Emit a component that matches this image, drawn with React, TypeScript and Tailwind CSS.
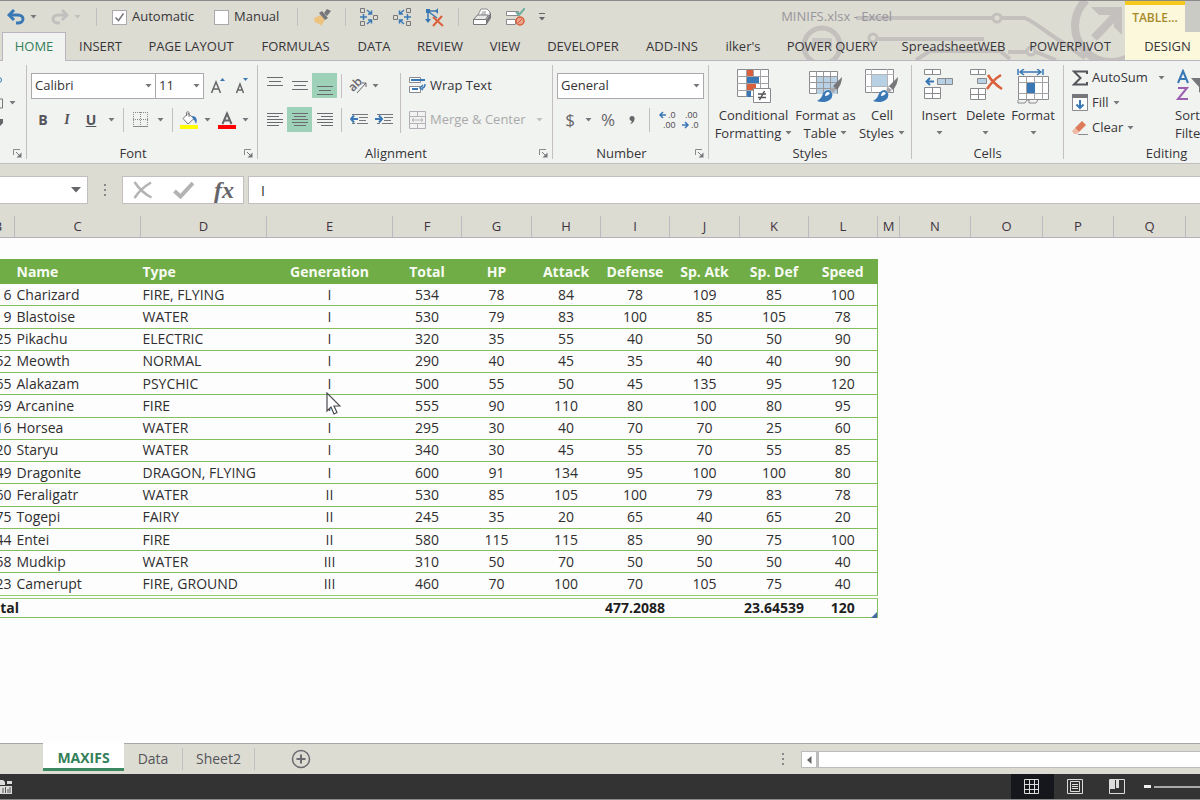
import type { ReactNode } from 'react';
import clsx from 'clsx';

const tabs = [
  { label: 'HOME', width: 'w-[64px]' },
  { label: 'INSERT', width: 'w-[69px]' },
  { label: 'PAGE LAYOUT', width: 'w-[112px]' },
  { label: 'FORMULAS', width: 'w-[97px]' },
  { label: 'DATA', width: 'w-[60px]' },
  { label: 'REVIEW', width: 'w-[72px]' },
  { label: 'VIEW', width: 'w-[58px]' },
  { label: 'DEVELOPER', width: 'w-[98px]' },
  { label: 'ADD-INS', width: 'w-[80px]' },
  { label: "ilker's", width: 'w-[62px]' },
  { label: 'POWER QUERY', width: 'w-[116px]' },
  { label: 'SpreadsheetWEB', width: 'w-[127px]' },
  { label: 'POWERPIVOT', width: 'w-[106px]' },
];

const columns = [
  { letter: 'B', width: 'w-[33px]' },
  { letter: 'C', width: 'w-[126px]' },
  { letter: 'D', width: 'w-[126px]' },
  { letter: 'E', width: 'w-[126px]' },
  { letter: 'F', width: 'w-[69px]' },
  { letter: 'G', width: 'w-[70px]' },
  { letter: 'H', width: 'w-[69px]' },
  { letter: 'I', width: 'w-[69px]' },
  { letter: 'J', width: 'w-[70px]' },
  { letter: 'K', width: 'w-[69px]' },
  { letter: 'L', width: 'w-[69px]' },
  { letter: 'M', width: 'w-[22px]' },
  { letter: 'N', width: 'w-[71px]' },
  { letter: 'O', width: 'w-[72px]' },
  { letter: 'P', width: 'w-[71px]' },
  { letter: 'Q', width: 'w-[72px]' },
];

const headings = [
  'Generation',
  'Total',
  'HP',
  'Attack',
  'Defense',
  'Sp. Atk',
  'Sp. Def',
  'Speed',
];

type Row = [number, string, string, string, ...number[]];

const rows: Row[] = [
  [6, 'Charizard', 'FIRE, FLYING', 'I', 534, 78, 84, 78, 109, 85, 100],
  [9, 'Blastoise', 'WATER', 'I', 530, 79, 83, 100, 85, 105, 78],
  [25, 'Pikachu', 'ELECTRIC', 'I', 320, 35, 55, 40, 50, 50, 90],
  [52, 'Meowth', 'NORMAL', 'I', 290, 40, 45, 35, 40, 40, 90],
  [65, 'Alakazam', 'PSYCHIC', 'I', 500, 55, 50, 45, 135, 95, 120],
  [59, 'Arcanine', 'FIRE', 'I', 555, 90, 110, 80, 100, 80, 95],
  [116, 'Horsea', 'WATER', 'I', 295, 30, 40, 70, 70, 25, 60],
  [120, 'Staryu', 'WATER', 'I', 340, 30, 45, 55, 70, 55, 85],
  [149, 'Dragonite', 'DRAGON, FLYING', 'I', 600, 91, 134, 95, 100, 100, 80],
  [160, 'Feraligatr', 'WATER', 'II', 530, 85, 105, 100, 79, 83, 78],
  [175, 'Togepi', 'FAIRY', 'II', 245, 35, 20, 65, 40, 65, 20],
  [244, 'Entei', 'FIRE', 'II', 580, 115, 115, 85, 90, 75, 100],
  [258, 'Mudkip', 'WATER', 'III', 310, 50, 70, 50, 50, 50, 40],
  [323, 'Camerupt', 'FIRE, GROUND', 'III', 460, 70, 100, 70, 105, 75, 40],
];

const totals = ['', '', '', '', '477.2088', '', '23.64539', '120'];

const Caret = ({ className = 'text-[#77767a]' }: { className?: string }) => (
  <svg
    width="7"
    height="4"
    viewBox="0 0 7 4"
    className={clsx('inline-block shrink-0', className)}
    aria-hidden="true"
  >
    <path d="M0.5 0h6L3.500 3.500z" fill="currentColor" />
  </svg>
);

const Divider = ({ className }: { className?: string }) => (
  <div className={clsx('w-px shrink-0 bg-[#c3bfc0]', className)} />
);

type IconButtonProps = {
  label: string;
  className?: string;
  children: ReactNode;
};

const IconButton = ({ label, className, children }: IconButtonProps) => (
  <button
    type="button"
    aria-label={label}
    className={clsx(
      'flex h-[25px] shrink-0 items-center justify-center',
      className
    )}
  >
    {children}
  </button>
);

type GroupProps = {
  title: string;
  className: string;
  launcher?: boolean;
  children: ReactNode;
};

const Group = ({ title, className, launcher, children }: GroupProps) => (
  <section
    aria-label={title || 'Clipboard'}
    className={clsx(
      'mt-1 flex h-[94px] shrink-0 flex-col justify-between border-r border-[#c3bfc0]',
      className
    )}
  >
    {children}
    <div className="flex h-3 items-center">
      <span className="flex-1 text-center leading-[18px]">{title}</span>
      {launcher && (
        <button
          type="button"
          aria-label={`${title || 'Clipboard'} settings`}
          className="flex w-[18px] items-center justify-center"
        >
          <svg width="9" height="9" viewBox="0 0 9 9" fill="none">
            <path d="M.5 6V.5H7" stroke="#8a898d" />
            <path d="M3 3l3 3" stroke="#77767a" />
            <path d="M8.500 3.500v5h-5z" fill="#77767a" />
          </svg>
        </button>
      )}
    </div>
  </section>
);

type DropdownProps = {
  label: string;
  value: string;
  className: string;
};

const Dropdown = ({ label, value, className }: DropdownProps) => (
  <div className={clsx('relative h-[26px] shrink-0', className)}>
    <select
      aria-label={label}
      className="h-full w-full appearance-none border border-[#aba9ad] bg-white pl-[3px] text-[13px] text-[#333236]"
    >
      <option>{value}</option>
    </select>
    <div className="pointer-events-none absolute inset-y-0 right-1 flex items-center">
      <Caret />
    </div>
  </div>
);

// Ruled lines; `kind` moves or shortens them
const LinesIcon = ({ kind }: { kind: string }) => {
  const paths: Record<string, string> = {
    top: 'M0 2.500h16M2 6.500h12M0 10.500h16',
    middle: 'M0 6.500h16M2 10.500h12M0 14.500h16',
    bottom: 'M0 11.500h16M2 15.500h12M0 19.500h16',
    left: 'M0 4.500h16M0 7.500h12M0 10.500h16M0 13.500h16M0 16.500h12',
    center: 'M0 4.500h16M2 7.500h12M0 10.500h16M0 13.500h16M2 16.500h12',
    right: 'M0 4.500h16M4 7.500h12M0 10.500h16M0 13.500h16M4 16.500h12',
  };
  return (
    <svg width="16" height="21" viewBox="0 0 16 21">
      <path d={paths[kind]} stroke="#6b6a70" fill="none" />
    </svg>
  );
};

const IndentIcon = ({ out }: { out?: boolean }) => (
  <svg width="18" height="15" viewBox="0 0 18 15" fill="none">
    <path d="M2 2.500h16M9 5.500h9M9 8.500h7M2 11.500h3M7 11.500h11" stroke="#77767a" />
    <path
      d={out ? 'M8 7H1M4 3.500L1 7l3 3.500' : 'M0 7h7M4 3.500L7 7l-3 3.500'}
      stroke="#3a78b5"
      strokeWidth="2"
    />
  </svg>
);

const TraceIcon = ({ flip }: { flip?: boolean }) => (
  <svg
    width="20"
    height="20"
    viewBox="0 0 20 20"
    fill="none"
    className={flip ? '-scale-x-100' : ''}
  >
    <path
      d="M1.500 1.500h4v4h-4zM1.500 14.500h4v4h-4zM14.500 8.500h4v4h-4z"
      stroke="#77767a"
    />
    <path
      d="M1 10h7M4.500 7v6M8 3l4 3.500M8 17l4-3.500M12.500 3.500v3.500H9M12.500 16.500V13H9"
      stroke="#3a78b5"
      strokeWidth="1.500"
    />
  </svg>
);

const BrushShape = () => (
  <>
    <path d="M34 8l-9 9 4 4c3-4 5-8 5-13z" fill="#77767a" />
    <path d="M24 18l-2 3 3 3 3-3z" fill="#a9a8ac" />
    <path d="M21 21c-4 0-6 3-7 6-1 2-3 4-5 5 6 2 13 1 15-4 1-3 0-5-3-7z" fill="#3a78b5" />
    <path d="M20 23c-2 0-3 2-3 4 2 0 4-1 5-3z" fill="#fff" />
  </>
);

const ConditionalIcon = () => (
  <svg width="36" height="34" viewBox="0 0 36 34" fill="none">
    <path d="M1.500.5h31v27h-31z" fill="#fff" stroke="#8a898d" />
    <path
      d="M10.500 0v28M17.500 0v28M24.500 0v28M1 7.500h32M1 14.500h32M1 21.500h32"
      stroke="#a3a2a6"
    />
    <path d="M11 1h6v6h-6zM11 15h9v6h-9z" fill="#d9603b" />
    <path d="M11 8h12v6H11zM11 22h4v6h-4z" fill="#3a78b5" />
    <path d="M17.500 19.500h17v14h-17z" fill="#fff" stroke="#8a898d" />
    <path d="M22 25h8M22 28.500h8M28.500 22l-5 9" stroke="#55545a" strokeWidth="1.500" />
  </svg>
);

const FormatTableIcon = () => (
  <svg width="36" height="34" viewBox="0 0 36 34" fill="none">
    <path d="M1.500 2.500h28v22h-28z" fill="#fff" stroke="#8a898d" />
    <path d="M9 8h20v17H9z" fill="#b7d0e4" />
    <path
      d="M8.500 2v23M15.500 2v23M22.500 2v23M1 7.500h29M1 13.500h29M1 19.500h29"
      stroke="#98979c"
    />
    <BrushShape />
  </svg>
);

const CellStylesIcon = () => (
  <svg width="36" height="34" viewBox="0 0 36 34" fill="none">
    <path d="M1.500.5h28v23h-28z" fill="#fff" stroke="#8a898d" />
    <path d="M8 6h15v11H8z" fill="#b7d0e4" />
    <path d="M7.500 0v24M23.500 0v24M1 5.500h29M1 17.500h29" stroke="#b5b4b8" />
    <BrushShape />
  </svg>
);

const InsertIcon = () => (
  <svg width="30" height="34" viewBox="0 0 30 34" fill="none">
    <path d="M.5.5h16v5H.500zM8.500 0v6" fill="#fff" stroke="#8a898d" />
    <path d="M.5 18.500h16v11H.500zM.5 24.500h16M8.500 18v12" fill="#fff" stroke="#8a898d" />
    <path d="M13.500 9.500h15v6h-15zM21.500 9v7" fill="#b7d0e4" stroke="#8a898d" />
    <path d="M10 12.500H3M6 9l-3.500 3.500L6 16" stroke="#3a78b5" strokeWidth="2" />
  </svg>
);

const DeleteIcon = () => (
  <svg width="34" height="34" viewBox="0 0 34 34" fill="none">
    <path d="M1.500.5h15v5h-15zM9.500 0v6" fill="#fff" stroke="#8a898d" />
    <path d="M1.500 19.500h15v11h-15zM1 25.500h16M9.500 19v12" fill="#fff" stroke="#8a898d" />
    <path d="M8.500 9.500h9v5h-9z" fill="#b7d0e4" stroke="#8a898d" />
    <path d="M19 6c3 5 8 10 14 14M32 6c-5 3-10 8-14 14" stroke="#d9603b" strokeWidth="2.500" />
  </svg>
);

const FormatIcon = () => (
  <svg width="34" height="36" viewBox="0 0 34 36" fill="none">
    <path d="M2 0v6M27 0v6M4 3h21M8 0L4 3l4 3M21 0l4 3-4 3" stroke="#3a78b5" strokeWidth="1.500" />
    <path d="M2.500 7.500h30v23h-30z" fill="#fff" stroke="#8a898d" />
    <path d="M10.500 7v24M18.500 7v24M26.500 7v24M2 13.500h31M2 24.500h31" stroke="#a3a2a6" />
    <path d="M11 14h8v10h-8z" fill="#3a78b5" />
    <path d="M2 31v3h7l2-3h2v3h7l2-3" stroke="#8a898d" />
  </svg>
);

const Circuit = () => (
  <svg
    className="pointer-events-none absolute top-0 right-0"
    width="420"
    height="59"
    viewBox="780 1 420 59"
    fill="none"
    stroke="#c3c0be"
    aria-hidden="true"
  >
    <path d="M856 18h136M1002 18h23c10 4 20 14 40 26l20 14" strokeWidth="4" />
    <circle cx="997" cy="18" r="4" strokeWidth="3" />
    <circle cx="822" cy="46" r="18" strokeWidth="5" />
    <path d="M812 38h20v10h-4v-5h-4v5h-4v-5h-4v5h-4z" fill="#c9c6c4" stroke="none" />
    <circle cx="873" cy="38" r="4" strokeWidth="3" />
    <path d="M878 39h106" strokeWidth="4" />
    <path d="M916 60l14-9h70l10 8M1008 52h18M1036 52l20 8" strokeWidth="4" />
    <circle cx="1031" cy="51" r="4" strokeWidth="3" />
    <path d="M1086 0a36 36 0 1 0 50 0" strokeWidth="8" />
    <path d="M1094 38l22-23" strokeWidth="8" />
    <path d="M1091 7h31v28l-8-8V15h-15z" fill="#c3c0be" stroke="none" />
  </svg>
);

const QuickAccess = () => (
  <div className="flex h-[31px] items-center pt-px pl-[7px]">
    <button type="button" aria-label="Undo" className="w-[18px]">
      <svg width="18" height="16" viewBox="0 0 18 16" fill="none">
        <path d="M3 6h8c3 0 5 2 5 4s-2 4-5 4H9" stroke="#3a78b5" strokeWidth="3" />
        <path d="M7 1L2 6l5 5" stroke="#3a78b5" strokeWidth="3" />
      </svg>
    </button>
    <Caret className="ml-[5px] text-[#77767a]" />
    <button type="button" aria-label="Redo" className="ml-[14px] w-[18px]">
      <svg width="18" height="16" viewBox="0 0 18 16" fill="none">
        <path d="M15 6H7c-3 0-5 2-5 4s2 4 5 4h2" stroke="#c2c0bf" strokeWidth="3" />
        <path d="M11 1l5 5-5 5" stroke="#c2c0bf" strokeWidth="3" />
      </svg>
    </button>
    <Caret className="ml-[5px] text-[#c2c0bf]" />
    <Divider className="ml-[15px] h-[18px]" />
    <label className="ml-[15px] flex items-center">
      <input
        type="checkbox"
        defaultChecked
        className="peer h-[15px] w-[15px] appearance-none border border-[#aba9ad] bg-white"
      />
      <svg
        width="15"
        height="15"
        viewBox="0 0 15 15"
        fill="none"
        className="-ml-[15px] hidden peer-checked:block"
      >
        <path d="M3.500 7.500l3 3 5-7" stroke="#77767a" strokeWidth="1.500" />
      </svg>
      <span className="ml-[5px] w-[62px]">Automatic</span>
    </label>
    <label className="ml-5 flex items-center">
      <input
        type="checkbox"
        className="h-[15px] w-[15px] appearance-none border border-[#aba9ad] bg-white"
      />
      <span className="ml-[5px] w-[46px]">Manual</span>
    </label>
    <Divider className="ml-[17px] h-[18px]" />
    <button type="button" aria-label="Format Painter" className="ml-[15px]">
      <svg width="18" height="17" viewBox="0 0 18 17">
        <path d="M1 9l7-3 4 5-4 6-2-3-1 2-1-3-2 1z" fill="#ecc27e" />
        <path d="M6 4l3-2 6 7-3 2z" fill="#77767a" />
        <path d="M11 4l3-4 4 2-4 5z" fill="#77767a" />
      </svg>
    </button>
    <Divider className="ml-[14px] h-[18px]" />
    <button type="button" aria-label="Trace Precedents" className="ml-[13px]">
      <TraceIcon />
    </button>
    <button type="button" aria-label="Trace Dependents" className="ml-[13px]">
      <TraceIcon flip />
    </button>
    <button type="button" aria-label="Remove Arrows" className="ml-[13px]">
      <svg width="19" height="19" viewBox="0 0 19 19" fill="none">
        <path d="M3 3v11M3 3h10M4 4l8 6" stroke="#3a78b5" strokeWidth="1.500" />
        <path d="M1 1h4v4H1zM10 3l3-3v6zM0 11h6l-3 4z" fill="#3a78b5" />
        <path d="M8 9l10 9M17 8L8 18" stroke="#d9603b" strokeWidth="2" />
      </svg>
    </button>
    <Divider className="ml-[14px] h-[18px]" />
    <button type="button" aria-label="Print" className="ml-[14px]">
      <svg width="20" height="18" viewBox="0 0 20 18" fill="none">
        <path d="M5 7l3-6h6l3 3v4" fill="#fff" stroke="#8a898d" />
        <path d="M.5 11.500l4-4.500h11l-3 4.500z" fill="#e8e8e6" stroke="#77767a" />
        <path d="M.5 11.500h13v5H.500z" fill="#fff" stroke="#77767a" />
        <path d="M14 11l4-7v6l-4 6z" fill="#77767a" />
        <path d="M9 4h4M8 6h5" stroke="#8a898d" />
      </svg>
    </button>
    <button type="button" aria-label="Validate" className="ml-[13px]">
      <svg width="19" height="18" viewBox="0 0 19 18" fill="none">
        <path d="M.5 3.500h12v4H.500zM.5 11.500h9v5h-9z" fill="#fff" stroke="#8a898d" />
        <path d="M10 4l3 3 6-7" stroke="#6fae9c" strokeWidth="2" />
        <circle cx="14" cy="13" r="4" fill="#e9a28b" stroke="#d9603b" strokeWidth="1.500" />
        <path d="M11.500 15.500l5-5" stroke="#d9603b" />
      </svg>
    </button>
    <button type="button" aria-label="Customize" className="ml-[14px]">
      <svg width="7" height="8" viewBox="0 0 7 8">
        <path d="M0 .5h6" stroke="#66656a" />
        <path d="M0 4h6L3 7.500z" fill="#66656a" />
      </svg>
    </button>
    <h1 className="ml-auto text-[13px] whitespace-nowrap text-[#99959c]">
      MINIFS.xlsx - Excel
    </h1>
  </div>
);

const FontGroup = () => (
  <Group title="Font" className="w-[231px]" launcher>
    <div className="flex flex-col gap-2 pt-2 pl-1">
      <div className="flex">
        <Dropdown label="Font" value="Calibri" className="w-[125px]" />
        <Dropdown label="Font size" value="11" className="-ml-px w-[49px]" />
        <IconButton label="Increase font size" className="w-[27px]">
          <svg width="16" height="16" viewBox="0 0 16 16" fill="none">
            <path d="M1.500 15L6 4l4.500 11M3 11h6" stroke="#66656a" strokeWidth="1.500" />
            <path d="M10 3h5l-2.500-3z" fill="#3a78b5" />
          </svg>
        </IconButton>
        <IconButton label="Decrease font size" className="w-[22px]">
          <svg width="14" height="16" viewBox="0 0 14 16" fill="none">
            <path d="M1.500 15L5 6l3.500 9M3 12h4" stroke="#66656a" strokeWidth="1.500" />
            <path d="M8 0h5l-2.500 3z" fill="#3a78b5" />
          </svg>
        </IconButton>
      </div>
      <div className="flex items-center text-[14px] text-[#55545a]">
        <IconButton label="Bold" className="w-6 font-bold">
          B
        </IconButton>
        <IconButton label="Italic" className="w-6 font-['Liberation_Serif',serif] font-bold italic">
          I
        </IconButton>
        <IconButton label="Underline" className="w-6 font-bold underline">
          U
        </IconButton>
        <IconButton label="Underline styles" className="w-4">
          <Caret />
        </IconButton>
        <Divider className="mx-1 h-6" />
        <IconButton label="Borders" className="w-6">
          <svg width="15" height="15" viewBox="0 0 15 15" fill="none">
            <path
              d="M.5 0v14M7.500 0v14M14.500 0v14M0 .5h15M0 7.500h15"
              stroke="#8a898d"
              strokeDasharray="1 1"
            />
            <path d="M0 14.500h15" stroke="#8a898d" />
          </svg>
        </IconButton>
        <IconButton label="Border styles" className="w-4">
          <Caret />
        </IconButton>
        <Divider className="mx-1 h-6" />
        <IconButton label="Fill color" className="w-6">
          <svg width="18" height="18" viewBox="0 0 18 18" fill="none">
            <path d="M3 7.500l5-5 6 5-6 5.500z" fill="#fff" stroke="#77767a" />
            <path d="M6.500 5V1.500c0-1 2.500-1 2.500 0V6" stroke="#77767a" />
            <path d="M12 5c4 0 6 3 4 8-1-2-1-4-3-5z" fill="#3a78b5" />
            <path d="M0 14h18v4H0z" fill="#ffff00" />
          </svg>
        </IconButton>
        <IconButton label="Fill colors" className="w-3">
          <Caret />
        </IconButton>
        <IconButton label="Font color" className="w-7">
          <svg width="18" height="18" viewBox="0 0 18 18" fill="none">
            <path d="M4.500 13L9 2.500 13.500 13M6 9.500h6" stroke="#66656a" strokeWidth="2" />
            <path d="M0 14h18v4H0z" fill="#ff0000" />
          </svg>
        </IconButton>
        <IconButton label="Font colors" className="w-2">
          <Caret />
        </IconButton>
      </div>
    </div>
  </Group>
);

const AlignmentGroup = () => (
  <Group title="Alignment" className="w-[295px]" launcher>
    <div className="flex pt-2">
      <div className="flex w-[142px] flex-col gap-[9px] pl-1">
        <div className="flex items-center">
          <IconButton label="Top align" className="w-[25px]">
            <LinesIcon kind="top" />
          </IconButton>
          <IconButton label="Middle align" className="w-[25px]">
            <LinesIcon kind="middle" />
          </IconButton>
          <IconButton label="Bottom align" className="w-[25px] bg-[#9dd1b8]">
            <LinesIcon kind="bottom" />
          </IconButton>
          <Divider className="mx-1 h-6" />
          <IconButton label="Orientation" className="w-6">
            <svg
              width="19"
              height="17"
              viewBox="0 0 19 17"
              fill="none"
              className="overflow-visible"
            >
              <text
                x="0"
                y="12"
                fontSize="12"
                fontWeight="600"
                fill="#66656a"
                transform="rotate(-45 6 9)"
              >
                ab
              </text>
              <path d="M8 16L17 6M13 6h4v4" stroke="#66656a" />
            </svg>
          </IconButton>
          <IconButton label="Orientation options" className="w-[11px]">
            <Caret />
          </IconButton>
        </div>
        <div className="flex items-center">
          <IconButton label="Align left" className="w-[25px]">
            <LinesIcon kind="left" />
          </IconButton>
          <IconButton label="Center" className="w-[25px] bg-[#9dd1b8]">
            <LinesIcon kind="center" />
          </IconButton>
          <IconButton label="Align right" className="w-[25px]">
            <LinesIcon kind="right" />
          </IconButton>
          <Divider className="mx-1 h-6" />
          <IconButton label="Decrease indent" className="w-[25px]">
            <IndentIcon out />
          </IconButton>
          <IconButton label="Increase indent" className="w-[25px]">
            <IndentIcon />
          </IconButton>
        </div>
      </div>
      <Divider className="h-[60px]" />
      <div className="flex flex-col gap-[9px] pl-2">
        <button type="button" className="flex h-[25px] items-center gap-1">
          <svg width="17" height="17" viewBox="0 0 17 17" fill="none">
            <path d="M.5.500h11v5H.500zM.5 9.500h11v6H.500z" fill="#fff" stroke="#8a898d" />
            <path d="M2 3h14M3 12h6" stroke="#3a78b5" strokeWidth="2" />
            <path d="M16 7c0 3-1 4-3 4M14 8l-3 3 3 2" stroke="#3a78b5" strokeWidth="1.500" />
          </svg>
          Wrap Text
        </button>
        <button type="button" className="flex h-[25px] items-center gap-1 text-[#aaa9ab]">
          <svg width="17" height="18" viewBox="0 0 17 18" fill="none" stroke="#b5b0b8">
            <path d="M.5.500h16v17H.500zM.5 5.500h16M.5 12.500h16M8.500 0v5M8.500 13v5" />
            <path d="M3 9h11M5 7L3 9l2 2M12 7l2 2-2 2" />
          </svg>
          Merge &amp; Center
          <Caret className="ml-[6px] text-[#c2c0bf]" />
        </button>
      </div>
    </div>
  </Group>
);

const DecimalIcon = ({ increase }: { increase?: boolean }) => (
  <svg
    width="18"
    height="19"
    viewBox="0 0 18 19"
    fill="none"
    className="overflow-visible font-['Liberation_Sans',sans-serif]"
  >
    <text x={increase ? 9 : 3} y="8" fontSize="9" fill="#55545a">
      {increase ? '.0' : '.00'}
    </text>
    <text x={increase ? 4 : 9} y="18" fontSize="9" fill="#55545a">
      {increase ? '.00' : '.0'}
    </text>
    <path
      d={increase ? 'M7 5H1M4 2L1 5l3 3' : 'M0 15h6M3 12l3 3-3 3'}
      stroke="#3a78b5"
      strokeWidth="1.500"
    />
  </svg>
);

const NumberGroup = () => (
  <Group title="Number" className="w-[156px]" launcher>
    <div className="flex flex-col gap-2 pt-2 pl-1">
      <Dropdown label="Number format" value="General" className="w-[147px]" />
      <div className="flex items-center text-[17px] text-[#66656a]">
        <IconButton label="Accounting format" className="w-[26px]">
          $
        </IconButton>
        <IconButton label="Currencies" className="w-[10px]">
          <Caret />
        </IconButton>
        <IconButton label="Percent" className="w-[30px]">
          %
        </IconButton>
        <IconButton label="Comma style" className="w-[18px]">
          <svg width="6" height="8" viewBox="0 0 6 8">
            <path d="M3 0c2 0 3 1.500 2.500 3.500C5 6 3.500 7.500 1 8c1-1 1.800-2 1.800-3C1.500 5 .5 4 .5 2.500S1.500 0 3 0z" fill="#66656a" />
          </svg>
        </IconButton>
        <Divider className="mx-2 h-6" />
        <IconButton label="Increase decimal" className="w-5">
          <DecimalIcon increase />
        </IconButton>
        <IconButton label="Decrease decimal" className="w-[26px]">
          <DecimalIcon />
        </IconButton>
      </div>
    </div>
  </Group>
);

type BigButtonProps = {
  icon: ReactNode;
  first: string;
  second?: string;
  className: string;
};

const BigButton = ({ icon, first, second, className }: BigButtonProps) => (
  <button
    type="button"
    className={clsx(
      'flex shrink-0 flex-col leading-[18px] whitespace-nowrap',
      className
    )}
  >
    <span className="mb-[3px] flex h-[34px] items-start">{icon}</span>
    <span>{first}</span>
    <span className="flex h-[17px] items-center gap-1">
      {second}
      <Caret />
    </span>
  </button>
);

const EditingGroup = () => (
  <Group title="Editing" className="w-[206px]">
    <div className="flex">
      <div className="flex w-[108px] flex-col pl-2">
        <button type="button" className="flex h-[25px] items-center gap-1">
          <svg width="16" height="16" viewBox="0 0 16 16" fill="none">
            <path d="M15 4V1.500H2L8.500 8 2 14.500h13V12" stroke="#55545a" strokeWidth="2" />
          </svg>
          <span className="w-[62px] text-left">AutoSum</span>
          <Caret />
        </button>
        <button type="button" className="flex h-[25px] items-center gap-1">
          <svg width="16" height="17" viewBox="0 0 16 17" fill="none">
            <path d="M.5.500h15v16H.500z" fill="#fff" stroke="#8a898d" />
            <path d="M0 0h16v4H0z" fill="#77767a" />
            <path d="M8 6v8M4.500 10.500L8 14l3.500-3.500" stroke="#3a78b5" strokeWidth="2" />
          </svg>
          <span>Fill</span>
          <Caret />
        </button>
        <button type="button" className="flex h-[25px] items-center gap-1">
          <svg width="16" height="16" viewBox="0 0 16 16" fill="none">
            <path d="M3 8l7-7 4 4-7 7z" fill="#dd7a59" />
            <path d="M3 8l4 4-2 2H2L0 11z" fill="#f0b9a6" />
            <path d="M6 14.500h10" stroke="#8a898d" />
          </svg>
          <span>Clear</span>
          <Caret />
        </button>
      </div>
      <BigButton
        className="items-start pt-1 pl-[3px]"
        first="Sort &"
        second="Filter"
        icon={
          <svg width="38" height="34" viewBox="0 0 38 34" fill="none">
            <path d="M3 14L8 2l5 12M5 10h6" stroke="#3a78b5" strokeWidth="2" />
            <path d="M3 19h9L3 30h10" stroke="#9c5fb0" strokeWidth="2" />
            <path d="M16 9h22l-8 9v10l-6-5v-5z" fill="#77767a" />
          </svg>
        }
      />
    </div>
  </Group>
);

const Ribbon = () => (
  <div className="flex h-[104px] overflow-hidden border-t border-b border-t-[#bab5bf] border-b-[#c0bfbf] bg-[#f1f3f0]">
    <Group title="" className="w-[27px]" launcher>
      <button type="button" aria-label="Clipboard" className="flex pt-[11px]">
        <svg width="18" height="54" viewBox="0 0 18 54" fill="none">
          <circle cx="-1" cy="4" r="2.500" stroke="#3a78b5" />
          <path d="M0 23h2.500v9H0" stroke="#77767a" />
          <path d="M9.500 25h6l-3 3.500z" fill="#77767a" />
          <path d="M0 43h3v4l-3 3z" fill="#66656a" />
        </svg>
      </button>
    </Group>
    <FontGroup />
    <AlignmentGroup />
    <NumberGroup />
    <Group title="Styles" className="w-[203px]">
      <div className="flex pt-1 pl-1">
        <BigButton
          className="w-[81px] items-center"
          icon={<ConditionalIcon />}
          first="Conditional"
          second="Formatting"
        />
        <BigButton
          className="w-[63px] items-center"
          icon={<FormatTableIcon />}
          first="Format as"
          second="Table"
        />
        <BigButton
          className="w-[50px] items-center"
          icon={<CellStylesIcon />}
          first="Cell"
          second="Styles"
        />
      </div>
    </Group>
    <Group title="Cells" className="w-[152px]">
      <div className="flex pt-1 pl-1">
        <BigButton
          className="w-[46px] items-center"
          icon={<InsertIcon />}
          first="Insert"
        />
        <BigButton
          className="w-[47px] items-center"
          icon={<DeleteIcon />}
          first="Delete"
        />
        <BigButton
          className="w-[48px] items-center"
          icon={<FormatIcon />}
          first="Format"
        />
      </div>
    </Group>
    <EditingGroup />
  </div>
);

const FormulaBar = () => (
  <div className="flex h-[28px] items-stretch">
    <div className="flex w-[88px] items-center justify-end border border-l-0 border-[#c3bfc0] bg-white pr-[6px]">
      <button type="button" aria-label="Name box" className="flex">
        <svg width="10" height="6" viewBox="0 0 10 6">
          <path d="M0 0h10L5 5.500z" fill="#66656a" />
        </svg>
      </button>
    </div>
    <div className="flex w-[34px] flex-col items-center justify-center gap-[3px]">
      <span className="h-[2px] w-[2px] bg-[#88878a]" />
      <span className="h-[2px] w-[2px] bg-[#88878a]" />
      <span className="h-[2px] w-[2px] bg-[#88878a]" />
    </div>
    <div className="flex w-[122px] items-center border border-[#c3bfc0] bg-white pl-[10px]">
      <button type="button" aria-label="Cancel">
        <svg width="20" height="18" viewBox="0 0 20 18" fill="none">
          <path d="M1.500 1c4 6 10 12 17 15.500M18 1.500C12 5 6 10 1.500 17" stroke="#b3b3b3" strokeWidth="2.500" />
        </svg>
      </button>
      <button type="button" aria-label="Enter" className="ml-5">
        <svg width="21" height="17" viewBox="0 0 21 17" fill="none">
          <path d="M1.500 9l6 5.500L20 1" stroke="#b3b3b3" strokeWidth="4" />
        </svg>
      </button>
      <button
        type="button"
        aria-label="Insert function"
        className="ml-5 font-['Liberation_Serif',serif] text-[24px] leading-6 font-bold text-[#66656a] italic"
      >
        fx
      </button>
    </div>
    <input
      type="text"
      aria-label="Formula"
      defaultValue="I"
      className="ml-1 min-w-0 flex-1 border border-r-0 border-[#c3bfc0] bg-white pl-3 text-[14px] text-[#333]"
    />
  </div>
);

const ColumnLetters = () => (
  <div className="-ml-[19px] flex h-[34px] border-b border-[#b5b0b8] pt-[12px] text-[#3f3342]">
    {columns.map(({ letter, width }) => (
      <div
        key={letter}
        className={clsx(
          'shrink-0 border-l border-[#bdb9c0] text-center leading-[21px]',
          width
        )}
      >
        {letter}
      </div>
    ))}
    <div className="flex-1 border-l border-[#bdb9c0]" />
  </div>
);

const Grid = () => (
  <main className="relative min-h-0 flex-1 overflow-hidden bg-[#fdfdfd] pt-[21px] text-[14px] text-[#2f2f2f]">
    <div className="relative -ml-[19px] w-[896px]">
      <table className="h-[359px] w-full table-fixed border-collapse border-r border-[#80bf5b] leading-[18px]">
        <colgroup>
          {columns.slice(0, 11).map(({ letter, width }) => (
            <col key={letter} className={width} />
          ))}
        </colgroup>
        <thead>
          <tr className="h-6 border border-[#70ad47] bg-[#70ad47] text-[#f7fbf3]">
            <th className="p-0" aria-label="Number" />
            <th className="p-0 pl-[2px] text-left">Name</th>
            <th className="p-0 pl-[2px] text-left">Type</th>
            {headings.map((heading) => (
              <th key={heading} className="p-0 text-center">
                {heading}
              </th>
            ))}
          </tr>
        </thead>
        <tbody>
          {rows.map(([id, name, type, generation, ...stats]) => (
            <tr key={id} className="border-b border-[#80bf5b]">
              <td className="p-0 pr-[3px] text-right">{id}</td>
              <td className="p-0 pl-[2px]">{name}</td>
              <td className="p-0 pl-[2px]">{type}</td>
              <td className="p-0 text-center">{generation}</td>
              {stats.map((stat, index) => (
                <td key={index} className="p-0 text-center">
                  {stat}
                </td>
              ))}
            </tr>
          ))}
        </tbody>
        <tfoot>
          <tr className="h-5 border-t-4 border-b border-[#80bf5b] border-t-[#94cc74] font-bold text-[#1f1f1f] [border-top-style:double]">
            <td colSpan={2} className="p-0 pl-[2px]">
              Total
            </td>
            <td className="p-0" />
            {totals.map((total, index) => (
              <td key={index} className="p-0 text-center">
                {total}
              </td>
            ))}
          </tr>
        </tfoot>
      </table>
      <div className="absolute right-0 bottom-0 h-[6px] w-[6px] bg-[#4669a8] [clip-path:polygon(100%_0,100%_100%,0_100%)]" />
    </div>
    {/* mouse pointer */}
    <svg
      className="absolute top-[154px] left-[326px]"
      width="15"
      height="24"
      viewBox="0 0 15 24"
    >
      <path
        d="M1 1v18l4-4 3 7 3-1.500-3-6.500h6z"
        fill="#fff"
        stroke="#4a4a50"
        strokeWidth="1.200"
      />
    </svg>
  </main>
);

const SheetTabs = () => (
  <div className="flex h-[31px] shrink-0 items-start border-t border-[#a9a7a9] text-[14px] text-[#55545a]">
    <button
      type="button"
      className="-mt-px ml-[43px] h-[28px] w-[81px] border-b-[3px] border-[#3b8862] bg-white pt-1 font-bold text-[#33805a]"
    >
      MAXIFS
    </button>
    <button type="button" className="h-7 w-[58px]">
      Data
    </button>
    <Divider className="mt-1 h-[22px]" />
    <button type="button" className="h-7 w-[71px]">
      Sheet2
    </button>
    <Divider className="mt-1 h-[22px]" />
    <button type="button" aria-label="New sheet" className="mt-[5px] ml-9">
      <svg width="20" height="20" viewBox="0 0 20 20" fill="none" stroke="#6b6a70">
        <circle cx="10" cy="10" r="8.500" strokeWidth="1.500" />
        <path d="M10 5.500v9M5.500 10h9" strokeWidth="2" />
      </svg>
    </button>
    <div className="mt-[9px] ml-auto flex w-[399px]">
      <div className="-ml-[19px] flex w-[19px] flex-col gap-[3px]">
        <span className="h-[2px] w-[2px] bg-[#88878a]" />
        <span className="h-[2px] w-[2px] bg-[#88878a]" />
        <span className="h-[2px] w-[2px] bg-[#88878a]" />
      </div>
      <button
        type="button"
        aria-label="Scroll left"
        className="-mt-[2px] flex h-[17px] w-4 items-center justify-center border border-[#bdbcbc] bg-white"
      >
        <svg width="5" height="8" viewBox="0 0 5 8">
          <path d="M4.500 0v8L0 4z" fill="#66656a" />
        </svg>
      </button>
      <div className="-mt-[2px] h-[17px] flex-1 border border-r-0 border-l-2 border-[#bdbcbc] bg-white" />
    </div>
  </div>
);

const StatusBar = () => (
  <footer className="flex h-[26px] shrink-0 items-center justify-between border-b border-[#8a8a8a] bg-[#333]">
    <svg width="13" height="16" viewBox="0 0 13 16">
      <path d="M0 1h3l2 2v3H0zM7 2h5v3H7zM0 7h12v8H0z" fill="#dcdcda" />
      <path d="M3 9v5M5.500 8v6M8 10v4M10 8v6" stroke="#555" />
    </svg>
    <div className="flex h-full items-center">
      <button
        type="button"
        aria-label="Normal view"
        className="flex h-full w-[43px] items-center justify-center bg-[#16171c] pr-[2px]"
      >
        <svg width="16" height="15" viewBox="0 0 16 15" fill="none">
          <path
            d="M.5.500h14v14H.500zM5.500 0v15M10.500 0v15M0 5.500h15M0 10.500h15"
            stroke="#dcdcda"
          />
        </svg>
      </button>
      <button
        type="button"
        aria-label="Page layout view"
        className="flex w-[42px] items-center justify-center"
      >
        <svg width="16" height="15" viewBox="0 0 16 15" fill="none">
          <path d="M.5.500h15v14H.500zM3.500 2.500h9v10h-9z" stroke="#dcdcda" />
          <path d="M5 5.500h6M5 7.500h6M5 9.500h6" stroke="#dcdcda" />
        </svg>
      </button>
      <button
        type="button"
        aria-label="Page break preview"
        className="flex w-[42px] items-center justify-center"
      >
        <svg width="16" height="15" viewBox="0 0 16 15" fill="none">
          <path d="M.5.500h15v14H.500z" stroke="#dcdcda" />
          <path d="M1 1h5v9H1zM7 1h3v8H7z" fill="#dcdcda" />
        </svg>
      </button>
      <button type="button" aria-label="Zoom out" className="ml-[5px] p-px">
        <div className="h-[3px] w-[7px] bg-[#f0f0f0]" />
      </button>
      <div className="ml-[2px] h-[2px] w-[46px] bg-[#a9a9a9]" />
    </div>
  </footer>
);

const App = () => {
  return (
    <div className="flex h-screen w-full flex-col overflow-hidden bg-[#dcdcd2] font-['Open_Sans',sans-serif] text-[13px] text-[#37353a]">
      <header className="relative flex shrink-0 border-t border-[#8a8a8a]">
        <Circuit />
        <div className="relative min-w-0 flex-1">
          <div className="mr-[233px]">
            <QuickAccess />
          </div>
          <nav className="flex h-[28px] pl-[2px]">
            {tabs.map(({ label, width }) => (
              <button
                key={label}
                type="button"
                className={clsx(
                  'shrink-0 whitespace-nowrap',
                  width,
                  label === 'HOME'
                    ? 'relative z-10 -mb-px border border-b-0 border-[#bab5bf] bg-[#f1f3f0] text-[#33805a]'
                    : 'pt-[2px]'
                )}
              >
                {label}
              </button>
            ))}
          </nav>
        </div>
        <div className="relative flex w-[75px] flex-col bg-[#fbf8dc]">
          <div className="flex h-[31px]">
            <div className="flex w-[60px] items-center justify-center border-t-4 border-[#f7c91f] pb-px text-[12px] font-semibold text-[#a88a2a]">
              TABLE...
            </div>
            <div className="flex-1 bg-[#cbcbc6]" />
          </div>
          <button type="button" className="h-[28px] pt-[2px] pl-[10px]">
            DESIGN
          </button>
        </div>
      </header>
      <Ribbon />
      <div className="shrink-0 pt-3">
        <FormulaBar />
        <ColumnLetters />
      </div>
      <Grid />
      <SheetTabs />
      <StatusBar />
    </div>
  );
};

export default App;
